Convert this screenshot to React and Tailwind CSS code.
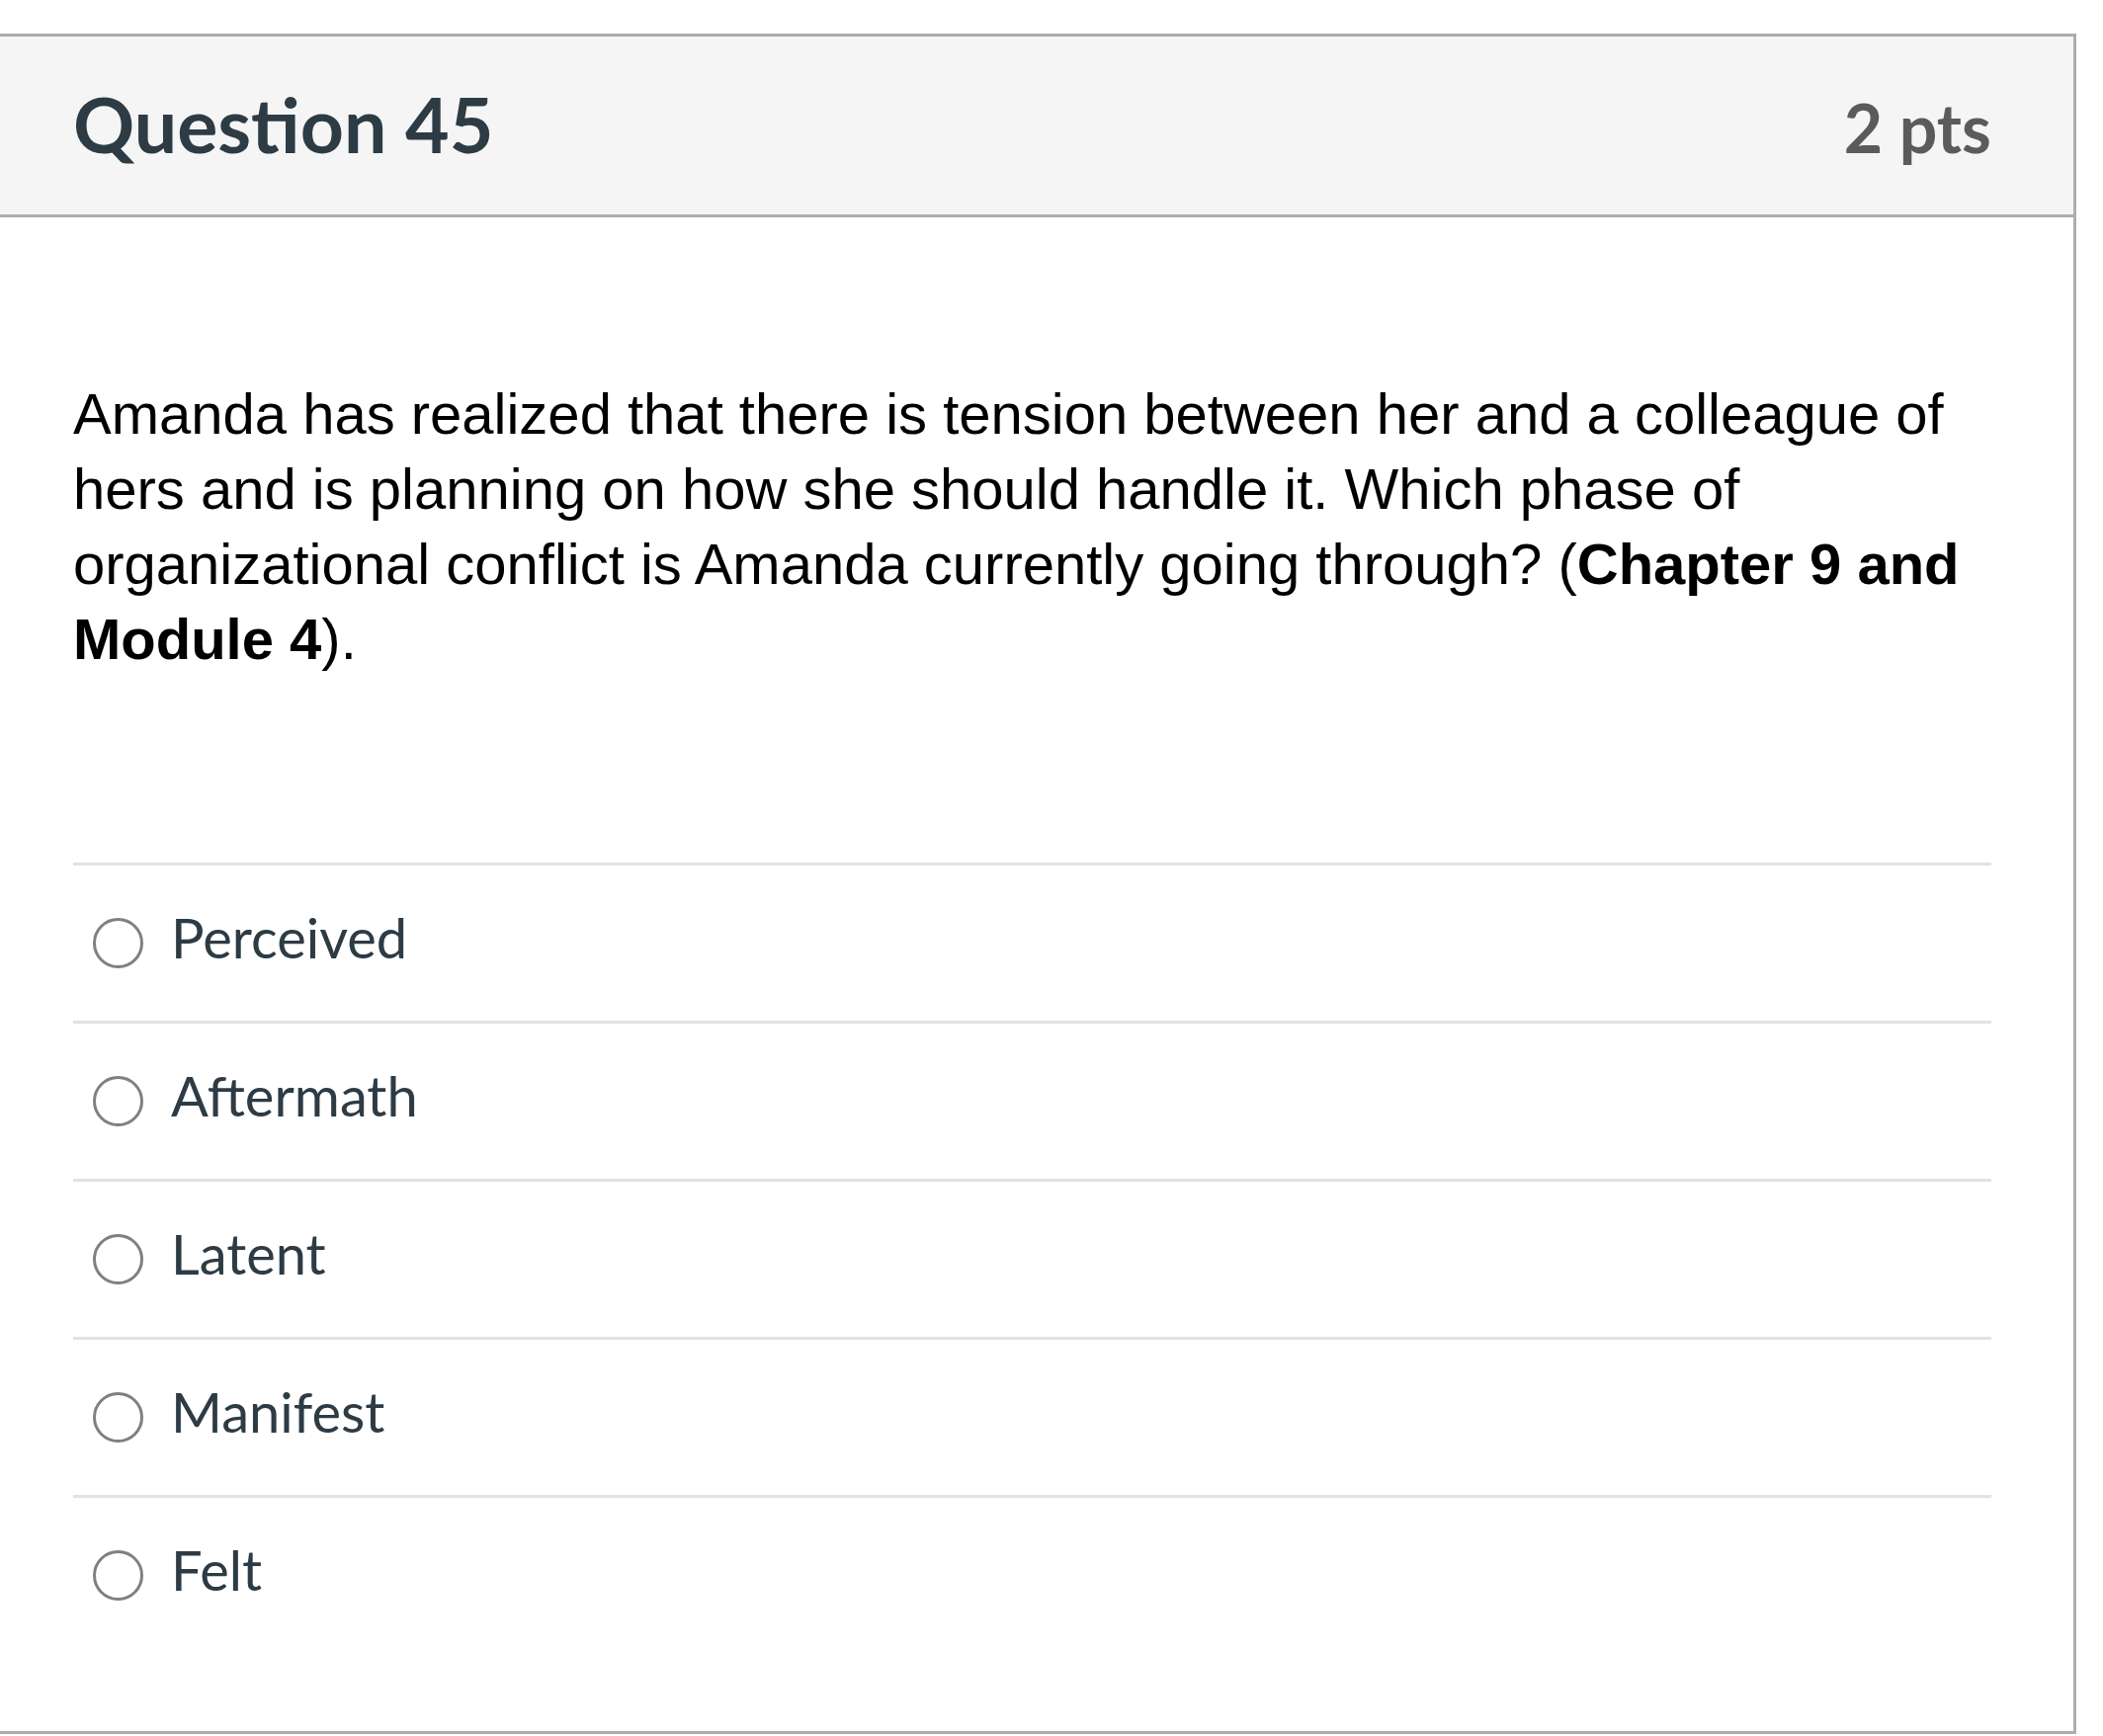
const answers = ['Perceived', 'Aftermath', 'Latent', 'Manifest', 'Felt'];

function Radio() {
  return (
    <span className="block w-[51px] h-[51px] shrink-0 rounded-full border-[3px] border-[#808080] bg-white" />
  );
}

export default function App() {
  return (
    <div className="min-h-screen bg-white pt-[34px]">
      <div className="w-[2101px] border-t-[3px] border-r-[3px] border-b-[3px] border-[#adadad] bg-white">
        {/* header */}
        <div className="flex items-baseline justify-between bg-[#f5f5f5] border-b-[3px] border-[#adadad] pl-[74px] pr-[83px] pt-[50px] pb-[53px]">
          <h2 className="font-['Lato',sans-serif] font-bold text-[77px] leading-none text-[#2d3b45]">Question 45</h2>
          <span className="font-['Lato',sans-serif] font-bold text-[68px] leading-none text-[#5b5b5b]">2 pts</span>
        </div>

        {/* body */}
        <div className="pl-[74px] pr-[83px] pt-[161px] pb-[79px]">
          <p className="font-['Liberation_Sans',Arial,sans-serif] text-[58px] leading-[76px] text-black">
            Amanda has realized that there is tension between her and a colleague of hers and is planning on how she should handle it. Which phase of organizational conflict is Amanda currently going through? (<b>Chapter 9 and Module 4</b>).
          </p>

          <div className="mt-[188px]">
            {answers.map((a) => (
              <label
                key={a}
                className="flex items-center h-[160px] border-t-[3px] border-[#e2e2e2] pl-[20px]"
              >
                <Radio />
                <span className="ml-[28px] mb-[12px] font-['Lato',sans-serif] text-[56px] leading-none text-[#2d3b45]">{a}</span>
              </label>
            ))}
          </div>
        </div>
      </div>
    </div>
  );
}
